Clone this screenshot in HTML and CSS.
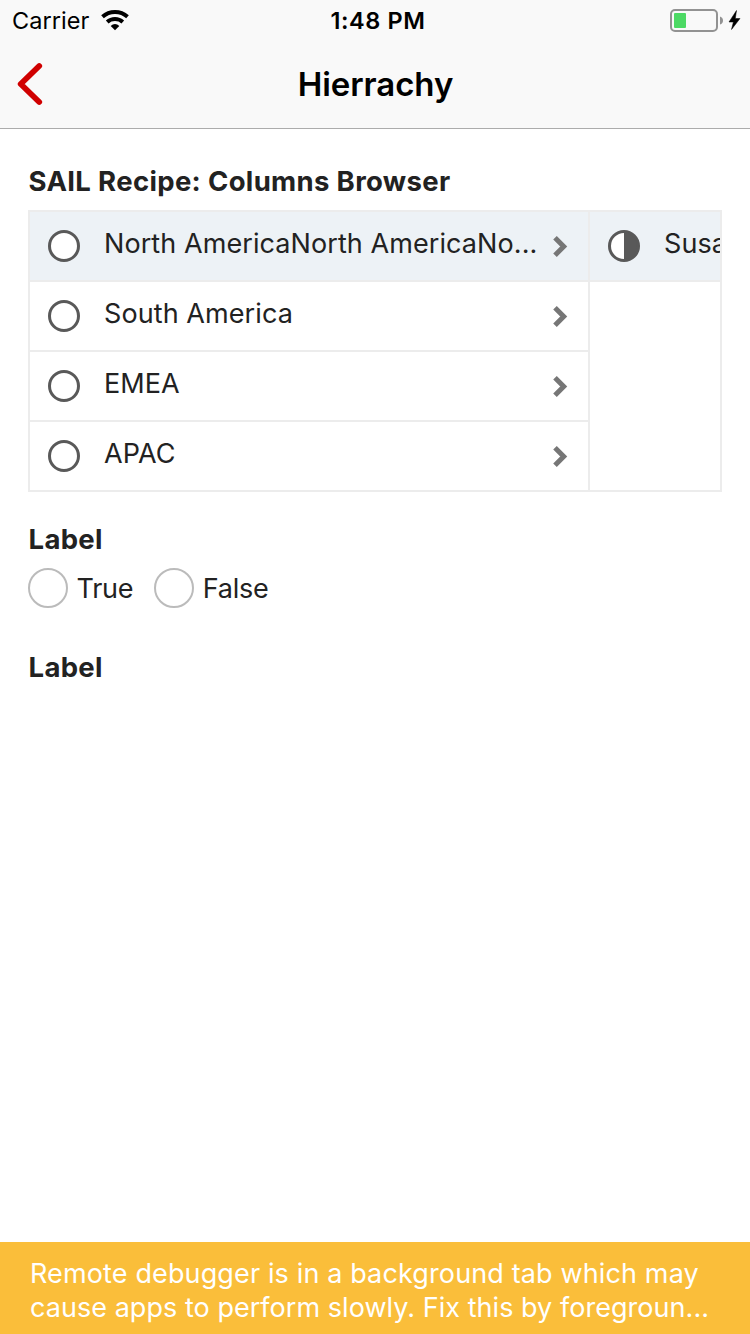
FILE: index.html
```html
<!DOCTYPE html>
<html lang="en">
<head>
<meta charset="utf-8">
<title>Hierrachy</title>
<link rel="stylesheet" href="styles.css">
</head>
<body>
<header class="header">
  <div class="status">
    <div class="carrier">
      <span class="carrier-name">Carrier</span>
      <svg class="wifi" width="28" height="21" viewBox="0 0 28 21">
        <path d="M1.500 6.800C8.500 0.400 19.500 0.400 26.500 6.800" fill="none" stroke="#000" stroke-width="3.900"/>
        <path d="M6.200 12C10.500 8 17.500 8 21.800 12" fill="none" stroke="#000" stroke-width="3.900"/>
        <path d="M9.700 16.100C12.200 13.300 15.800 13.300 18.300 16.100L14 20.300Z"/>
      </svg>
    </div>
    <span class="time">1:48 PM</span>
    <svg class="battery" width="72" height="24" viewBox="0 0 72 24">
      <rect x="1" y="1" width="46" height="21" rx="4" fill="none" stroke="#929292" stroke-width="2"/>
      <rect x="4" y="4" width="12" height="15" rx="1" fill="#4cd964"/>
      <path d="M50 7.500Q53 8.500 53 11.500T50 15.500Z" fill="#929292"/>
      <path d="M66.500 1.500L59 13H63.400L61.500 20.500L70 9.500H65.300Z" stroke="#000" stroke-width="0.500"/>
    </svg>
  </div>
  <div class="nav">
    <svg class="back" width="28" height="44" viewBox="0 0 28 44">
      <path d="M24.200 4L5.700 22L24.200 40" fill="none" stroke="#d00000" stroke-width="5.800" stroke-linecap="round" stroke-linejoin="round"/>
    </svg>
    <h1 class="title">Hierrachy</h1>
  </div>
</header>
<main class="content">
  <h2 class="label heading">SAIL Recipe: Columns Browser</h2>
  <div class="browser">
    <div class="column">
      <div class="row selected"><i class="node"></i><span class="name">North AmericaNorth AmericaNo...</span><svg class="chevron" width="16" height="22" viewBox="0 0 16 22"><path d="M3 2.800L11.700 11.500L3 20.200" fill="none" stroke="#767676" stroke-width="5"/></svg></div>
      <div class="row"><i class="node"></i><span class="name">South America</span><svg class="chevron" width="16" height="22" viewBox="0 0 16 22"><path d="M3 2.800L11.700 11.500L3 20.200" fill="none" stroke="#767676" stroke-width="5"/></svg></div>
      <div class="row"><i class="node"></i><span class="name">EMEA</span><svg class="chevron" width="16" height="22" viewBox="0 0 16 22"><path d="M3 2.800L11.700 11.500L3 20.200" fill="none" stroke="#767676" stroke-width="5"/></svg></div>
      <div class="row"><i class="node"></i><span class="name">APAC</span><svg class="chevron" width="16" height="22" viewBox="0 0 16 22"><path d="M3 2.800L11.700 11.500L3 20.200" fill="none" stroke="#767676" stroke-width="5"/></svg></div>
    </div>
    <div class="column">
      <div class="row selected"><i class="node half"></i><span class="name">Susa</span></div>
    </div>
  </div>
  <h2 class="label">Label</h2>
  <div class="options">
    <div class="option"><i class="radio"></i><span>True</span></div>
    <div class="option"><i class="radio"></i><span>False</span></div>
  </div>
  <h2 class="label">Label</h2>
</main>
<footer class="warning">
  <div class="line first">Remote debugger is in a background tab which may</div>
  <div class="line last">cause apps to perform slowly. Fix this by foregroun...</div>
</footer>
</body>
</html>
```

FILE: styles.css
```css
* { box-sizing: border-box; }
body {
  margin: 0;
  height: 1334px;
  display: flex;
  flex-direction: column;
  overflow: hidden;
  background: #fff;
  color: #222;
  font-family: Inter, "Liberation Sans", sans-serif;
  font-size: 27px;
}
svg { display: block; flex: none; }
h1, h2 { margin: 0; }
.header {
  height: 129px;
  flex: none;
  background: #f9f9f9;
  border-bottom: 1px solid #acacac;
  color: #000;
}
.status {
  height: 40px;
  display: grid;
  grid-template-columns: 1fr auto 1fr;
  align-items: center;
  padding: 1px 8px 0 12px;
  font-size: 23.500px;
}
.carrier { display: flex; align-items: center; gap: 12px; }
.carrier-name { letter-spacing: 0.050px; }
.time { font-weight: 600; letter-spacing: 0.600px; padding-left: 2px; }
.battery { justify-self: end; }
.nav {
  height: 88px;
  display: grid;
  grid-template-columns: 1fr auto 1fr;
  align-items: center;
  padding: 0 15px;
}
.title { font-size: 33px; line-height: 40px; font-weight: 600; letter-spacing: -0.080px; padding-left: 1px; }
.content { flex: 1; padding: 36px 28px 0; }
.label {
  padding: 0 0 2px 0.500px;
  font-size: 27.500px;
  line-height: 32px;
  font-weight: 700;
  letter-spacing: 0.340px;
}
.heading { margin-bottom: 11px; }
.browser {
  height: 282px;
  display: flex;
  overflow: hidden;
  border: 2px solid #ececec;
  margin-bottom: 31px;
}
.column { width: 560px; flex: none; border-right: 2px solid #ececec; }
.row {
  height: 70px;
  display: flex;
  align-items: center;
  padding: 0 20px 0 18px;
  border-bottom: 2px solid #ececec;
}
.selected { background: #edf2f6; }
.node {
  width: 32px;
  height: 32px;
  flex: none;
  margin-right: 24px;
  border: 3px solid #595959;
  border-radius: 50%;
  background: #fff;
}
.half { background: linear-gradient(90deg, #fff 50%, #595959 50%); }
.name { flex: 1; line-height: 34px; padding-bottom: 4px; white-space: nowrap; letter-spacing: 0.080px; }
.options { display: flex; gap: 21px; height: 63px; margin: 11px 0 20px; align-items: flex-start; letter-spacing: -0.250px; }
.option { display: flex; align-items: center; gap: 8.500px; }
.radio { width: 40px; height: 40px; border: 2px solid #bbb; border-radius: 50%; }
.warning {
  height: 92px;
  flex: none;
  padding: 15px 30px 0;
  background: #fabe3a;
  color: #fff;
  line-height: 34px;
  white-space: nowrap;
}
.first { letter-spacing: 0.130px; }
.last { letter-spacing: 0.040px; }
```
